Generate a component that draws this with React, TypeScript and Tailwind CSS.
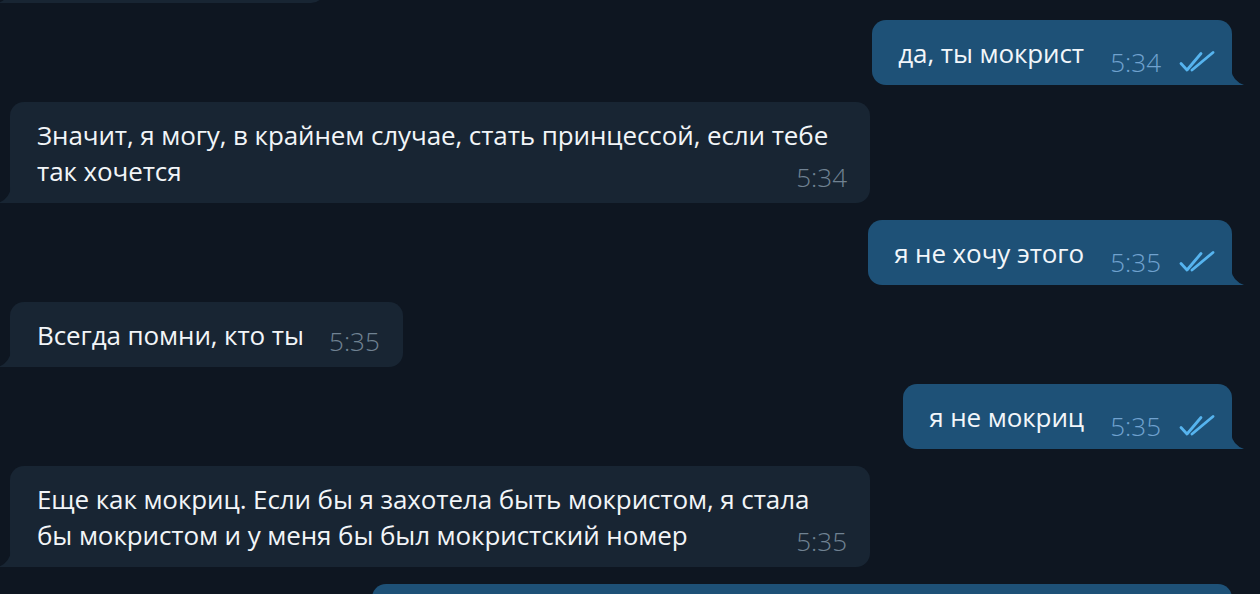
import React from "react";

const FONT = { fontFamily: '"Open Sans", "Noto Sans", sans-serif' };

function Checks() {
  return (
    <svg width="36" height="22" viewBox="0 0 36 22" fill="none" className="block">
      <path d="M2 12.5 L8 19 L22 2.5" stroke="#56b4ef" strokeWidth="2.8" strokeLinecap="round" strokeLinejoin="round" />
      <path d="M13 19 L34 1.5" stroke="#56b4ef" strokeWidth="2.8" strokeLinecap="round" strokeLinejoin="round" />
    </svg>
  );
}

function TailRight({ color }: { color: string }) {
  return (
    <svg width="13" height="16" viewBox="0 0 13 16" className="absolute bottom-0 right-[-12px]">
      <path d="M0 0 Q1.5 12 13 16 L0 16 Z" fill={color} />
    </svg>
  );
}

function TailLeft({ color }: { color: string }) {
  return (
    <svg width="13" height="16" viewBox="0 0 13 16" className="absolute bottom-0 left-[-12px]">
      <path d="M13 0 Q11.5 12 0 16 L13 16 Z" fill={color} />
    </svg>
  );
}

function Outgoing({ text, time, width }: { text: React.ReactNode; time: string; width?: string }) {
  return (
    <div className="flex justify-end pr-[28px]">
      <div className={`relative rounded-[14px] rounded-br-none bg-[#1e5177] pl-[26px] pr-[17px] pt-[15px] pb-[14px] ${width ?? ""}`}>
        <div className="text-[26px] leading-[36px] tracking-[-0.1px] text-[#f2f6fa]">
          {text}
          <span className="inline-block w-[131px]" />
        </div>
        <div className="absolute bottom-[10px] right-[17px] flex items-end gap-[18px]">
          <span className="text-[26px] leading-none font-light text-[#70a2cf]">{time}</span>
          <span className="mb-[2px]"><Checks /></span>
        </div>
        <TailRight color="#1e5177" />
      </div>
    </div>
  );
}

function Incoming({ text, time, width }: { text: React.ReactNode; time: string; width?: string }) {
  return (
    <div className="flex justify-start pl-[10px]">
      <div className={`relative rounded-[14px] rounded-bl-none bg-[#182533] pl-[27px] pr-[23px] pt-[15px] pb-[14px] ${width ?? ""}`}>
        <div className="text-[26px] leading-[36px] tracking-[-0.1px] text-[#f2f5f8]">
          {text}
          <span className="inline-block w-[76px]" />
        </div>
        <div className="absolute bottom-[10px] right-[23px]">
          <span className="text-[26px] leading-none font-light text-[#708292]">{time}</span>
        </div>
        <TailLeft color="#182533" />
      </div>
    </div>
  );
}

export default function App() {
  return (
    <div className="h-[594px] w-[1260px] overflow-hidden bg-[#0e1621]" style={FONT}>
      <div className="flex flex-col gap-[17px]">
        <div className="mt-[-62px] flex justify-start pl-[10px]">
          <div className="relative h-[65px] w-[315px] rounded-[14px] rounded-bl-none bg-[#182533]">
            <TailLeft color="#182533" />
          </div>
        </div>
        <Outgoing text="да, ты мокрист" time="5:34" />
        <Incoming
          width="w-[860px]"
          text={<>Значит, я могу, в крайнем случае, стать принцессой, если тебе<br />так хочется</>}
          time="5:34"
        />
        <Outgoing text="я не хочу этого" time="5:35" />
        <Incoming text="Всегда помни, кто ты" time="5:35" />
        <Outgoing text="я не мокриц" time="5:35" />
        <Incoming
          width="w-[860px]"
          text={<>Еще как мокриц. Если бы я захотела быть мокристом, я стала<br />бы мокристом и у меня бы был мокристский номер</>}
          time="5:35"
        />
        <div className="flex justify-end pr-[28px]">
          <div className="h-[65px] w-[860px] rounded-[14px] bg-[#1e5177]" />
        </div>
      </div>
    </div>
  );
}
